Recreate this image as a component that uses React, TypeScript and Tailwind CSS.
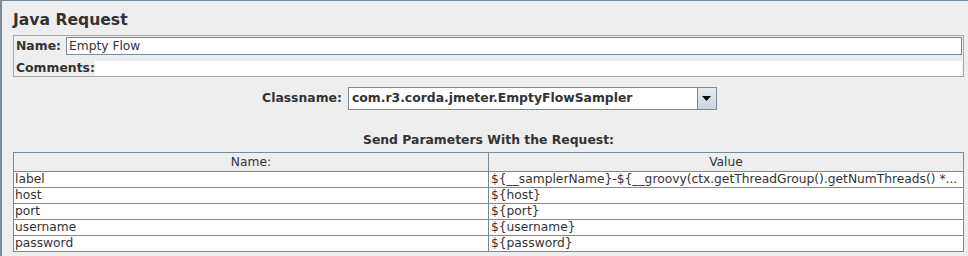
const rows = [
  { name: 'label', value: '${__samplerName}-${__groovy(ctx.getThreadGroup().getNumThreads() *...' },
  { name: 'host', value: '${host}' },
  { name: 'port', value: '${port}' },
  { name: 'username', value: '${username}' },
  { name: 'password', value: '${password}' },
];

export default function App() {
  return (
    <div className="h-[256px] w-[968px] overflow-hidden border-l-2 border-t border-[#7a8a99] bg-[#eeeeee] font-['DejaVu_Sans',sans-serif] text-[12.25px] text-[#333333]">
      <div className="pl-[11px] pr-[4px]">
        {/* Title */}
        <h1 className="mt-[9px] h-[20px] text-[15.6px] font-bold leading-[20px]">Java Request</h1>

        {/* Name / comments */}
        <div className="mt-[5px] border border-[#a8a8a8] bg-[#eeeeee] px-[1px] pt-[1px]">
          <div className="flex h-[18px] items-center">
            <span className="w-[51px] pl-[1px] text-[12.4px] font-bold">Name:</span>
            <div className="flex h-[18px] flex-1 items-center border border-[#7a8a99] bg-white pl-[2px]">Empty Flow</div>
          </div>
          <div className="mt-[6px] flex h-[15px] items-center">
            <span className="w-[80px] pl-[1px] text-[12.4px] font-bold">Comments:</span>
            <div className="h-[15px] flex-1 bg-white"></div>
          </div>
        </div>

        {/* Classname */}
        <div className="mt-[10px] flex items-center justify-center pl-[2px] text-[12.4px]">
          <span className="mr-[6px] font-bold">Classname:</span>
          <div className="flex h-[23px] w-[369px] border border-[#7a8a99] bg-white">
            <div className="flex flex-1 items-center pl-[3px] font-bold">com.r3.corda.jmeter.EmptyFlowSampler</div>
            <div className="flex w-[19px] items-center justify-center border-l border-[#7a8a99] bg-gradient-to-b from-[#e6ecf1] to-[#c9d4de]">
              <svg width="9" height="5" viewBox="0 0 9 5">
                <path d="M0 0h9L4.5 5z" fill="#000" />
              </svg>
            </div>
          </div>
        </div>

        {/* Parameters */}
        <div className="mt-[23px] text-center text-[12.4px] font-bold leading-[14px]">Send Parameters With the Request:</div>
        <div className="mt-[5px] border-x border-t border-[#7a8a99] bg-white">
          <div className="flex h-[19px] border-b border-[#7a8a99] bg-[#eeeeee]">
            <div className="flex w-[475px] items-center justify-center border-r border-[#7a8a99]">Name:</div>
            <div className="flex flex-1 items-center justify-center">Value</div>
          </div>
          {rows.map(r => (
            <div key={r.name} className="flex h-[16px] border-b border-[#7a8a99] leading-[15px]">
              <div className="w-[475px] border-r border-[#7a8a99] pl-[1px]">{r.name}</div>
              <div className="flex-1 overflow-hidden whitespace-nowrap pl-[2px]">{r.value}</div>
            </div>
          ))}
        </div>
      </div>
    </div>
  );
}
